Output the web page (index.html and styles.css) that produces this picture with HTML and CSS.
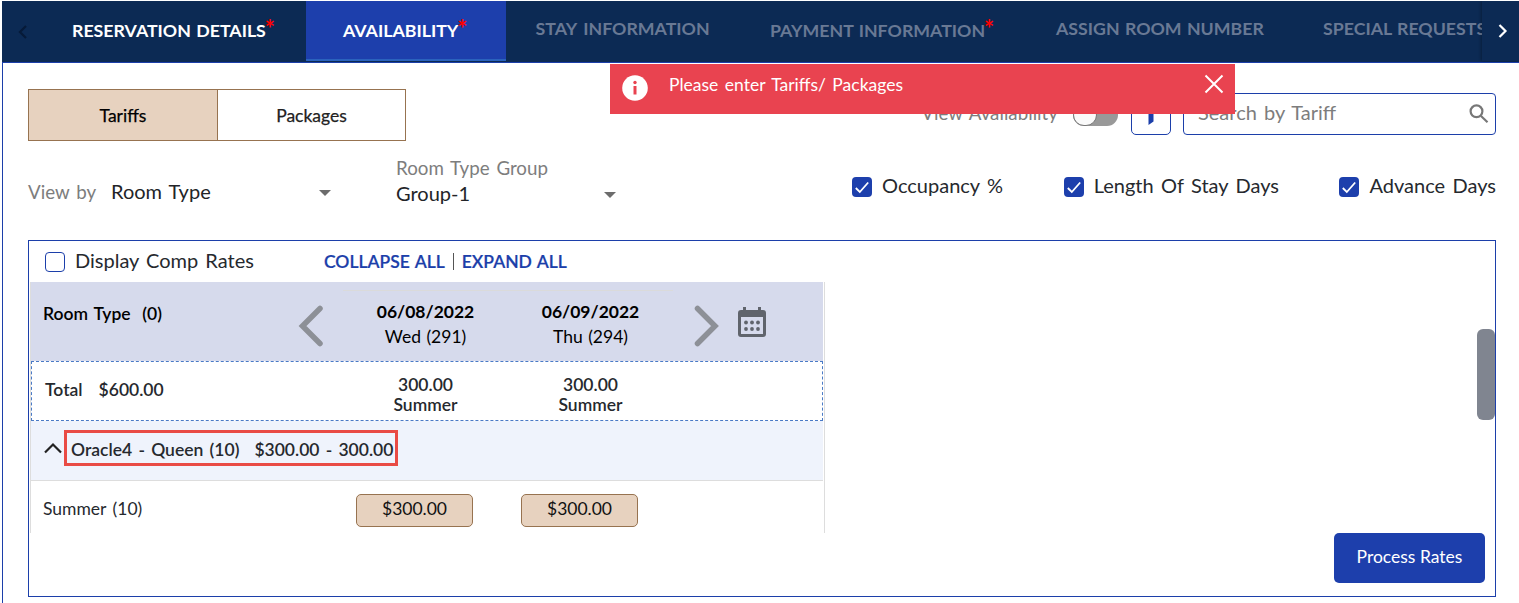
FILE: index.html
```html
<!DOCTYPE html>
<html lang="en">
<head>
<meta charset="utf-8">
<title>Availability</title>
<link rel="stylesheet" href="styles.css">
</head>
<body>
<div class="app">
  <nav class="tabs">
    <button class="scroll prev"><svg width="10" height="16" viewBox="0 0 10 16"><path d="M8 2 2 8l6 6"/></svg></button>
    <div class="tab t1"><span>RESERVATION DETAILS</span><sup>*</sup></div>
    <div class="tab t2 active"><span>AVAILABILITY</span><sup>*</sup></div>
    <div class="tab t3 off high"><span>STAY INFORMATION</span></div>
    <div class="tab t4 off"><span>PAYMENT INFORMATION</span><sup>*</sup></div>
    <div class="tab t5 off high"><span>ASSIGN ROOM NUMBER</span></div>
    <div class="tab t6 off high"><span>SPECIAL REQUESTS</span></div>
    <button class="scroll next"><svg width="10" height="16" viewBox="0 0 10 16"><path d="m1.500 2 6 6-6 6"/></svg></button>
  </nav>
  <main class="content">
    <div class="topline">
      <div class="segmented"><div class="seg on"><span>Tariffs</span></div><div class="seg"><span>Packages</span></div></div>
      <div class="tools">
        <span class="label view-avail">View Availability</span>
        <span class="switch"><i></i></span>
        <span class="filter"><svg width="16" height="22" viewBox="0 0 16 22"><path d="M0 2h16L10.500 10v8.500L5.500 22V10z"/></svg></span>
        <div class="search"><span class="label">Search by Tariff</span>
          <svg width="20" height="20" viewBox="0 0 20 20"><circle cx="7.500" cy="7.300" r="5.900"/><path d="m12 12 6.500 6.200"/></svg></div>
      </div>
    </div>
    <div class="filters">
      <div class="viewby"><span class="label">View by</span><span class="val">Room Type</span><i class="caret"></i></div>
      <div class="group"><span class="label">Room Type Group</span><div class="pick"><span class="val">Group-1</span><i class="caret"></i></div></div>
      <div class="checks">
        <div class="check"><svg width="20" height="20" viewBox="0 0 20 20"><rect width="20" height="20" rx="4"/><path d="m3.800 11 4 4L16.200 5.500"/></svg><span>Occupancy %</span></div>
        <div class="check"><svg width="20" height="20" viewBox="0 0 20 20"><rect width="20" height="20" rx="4"/><path d="m3.800 11 4 4L16.200 5.500"/></svg><span>Length Of Stay Days</span></div>
        <div class="check"><svg width="20" height="20" viewBox="0 0 20 20"><rect width="20" height="20" rx="4"/><path d="m3.800 11 4 4L16.200 5.500"/></svg><span>Advance Days</span></div>
      </div>
    </div>
    <section class="card">
      <div class="bar"><i class="box"></i><span class="comp">Display Comp Rates</span><span class="link">COLLAPSE ALL</span><i class="pipe"></i><span class="link">EXPAND ALL</span></div>
      <div class="table">
        <div class="row head">
          <div class="name"><span>Room Type&nbsp; (0)</span></div>
          <svg class="chev left" width="26" height="42" viewBox="0 0 26 42"><path d="M22 3.500 4.500 21 22 38.500"/></svg>
          <div class="date"><b>06/08/2022</b><span>Wed (291)</span></div>
          <div class="date"><b>06/09/2022</b><span>Thu (294)</span></div>
          <svg class="chev right" width="26" height="42" viewBox="0 0 26 42"><path d="M3.500 3.500 21 21 3.500 38.500"/></svg>
          <svg class="cal" width="28" height="32" viewBox="0 0 28 32"><path fill-rule="evenodd" d="M5 1h3v3h12V1h3v3h2a3 3 0 0 1 3 3v21a3 3 0 0 1-3 3H3a3 3 0 0 1-3-3V7a3 3 0 0 1 3-3h2zM3 11v17h22V11z"/><g><circle cx="8" cy="16.500" r="1.900"/><circle cx="14" cy="16.500" r="1.900"/><circle cx="20" cy="16.500" r="1.900"/><circle cx="8" cy="23" r="1.900"/><circle cx="14" cy="23" r="1.900"/><circle cx="20" cy="23" r="1.900"/></g></svg>
        </div>
        <div class="row total">
          <div class="name"><span>Total</span><span>$600.00</span></div>
          <div class="sum"><span>300.00</span><span>Summer</span></div>
          <div class="sum"><span>300.00</span><span>Summer</span></div>
        </div>
        <div class="row type">
          <svg width="18" height="12" viewBox="0 0 18 12"><path d="m1 10.500 8-8 8 8"/></svg>
          <div class="mark"><span>Oracle4 - Queen (10)</span><span>$300.00 - 300.00</span></div>
        </div>
        <div class="row rate">
          <div class="name"><span>Summer (10)</span></div>
          <div class="price"><span>$300.00</span></div>
          <div class="price"><span>$300.00</span></div>
        </div>
      </div>
      <button class="process"><span>Process Rates</span></button>
      <i class="thumb"></i>
    </section>
  </main>
</div>
<div class="toast">
  <svg class="info" width="26" height="26" viewBox="0 0 26 26"><circle cx="13" cy="13" r="12.800"/><circle class="r" cx="13" cy="7.500" r="1.700"/><path class="r" d="M11.500 11h3v8.500h-3z"/></svg>
  <span>Please enter Tariffs/ Packages</span>
  <svg class="close" width="20" height="20" viewBox="0 0 20 20"><path d="m1.500 1.500 17 17m0-17-17 17"/></svg>
</div>
</body>
</html>
```

FILE: styles.css
```css
* { box-sizing: border-box; }
body { margin: 0; background: #fff; font: 20px/24px Lato, "Liberation Sans", sans-serif; word-spacing: 2px; color: #26292e; overflow: hidden; }
span, b { white-space: nowrap; }
button { border: 0; padding: 0; font: inherit; word-spacing: inherit; }
svg { flex: none; display: block; }
.app { padding: 1px 0 0 2px; height: 603px; display: flex; flex-direction: column; }

.tabs { display: flex; height: 62px; background: #0c2a54; border-bottom: 1px solid #1c3faa; overflow: hidden; position: relative; flex: none; }
.tab { flex: none; height: 60px; padding-top: 17px; font-size: 17.75px; font-weight: 700; word-spacing: 1px; color: #fff; }
.tab sup { font-size: 24px; line-height: 0; color: #f00; font-weight: 700; vertical-align: -1px; margin-left: -1px; }
.high { padding-top: 15px; }
.off { color: #697994; }
.off sup { color: #f00; }
.active { background: #1d3fac; border-bottom: 2px solid #2a62bd; }
.t1 { width: 272px; padding-left: 38px; }
.t2 { width: 200px; padding-left: 37px; }
.t3 { width: 234px; padding-left: 29.5px; word-spacing: 2.5px; }
.t4 { width: 286px; padding-left: 30px; }
.t5 { width: 267px; padding-left: 30px; }
.t6 { width: 226px; padding-left: 30px; }
.scroll { background: #0c2a54; display: flex; align-items: center; flex: none; }
.scroll svg { fill: none; stroke-width: 2.2; stroke: #fff; }
.prev { width: 32px; padding-left: 15.5px; }
.prev svg { stroke: #061a38; }
.next { position: absolute; right: 0; top: 0; width: 37px; height: 60px; padding-left: 16px; box-shadow: -1px 0 3px rgba(0, 0, 0, .3); }

.content { flex: 1; border-left: 1px solid #1c3faa; padding: 26px 23px 6px 25px; display: flex; flex-direction: column; }
.topline { display: flex; justify-content: space-between; height: 52px; flex: none; }
.segmented { display: flex; width: 378px; border: 1px solid #977350; color: #222; font-size: 17.5px; }
.seg { flex: 1; display: flex; justify-content: center; padding-top: 14px; -webkit-text-stroke: .25px; }
.seg.on { background: #e7d2bf; border-right: 1px solid #977350; color: #000; flex: 0 0 189px; }
.label { color: #7d7d7d; font-size: 18.75px; }
.tools { display: flex; align-items: flex-start; padding-top: 4px; }
.view-avail { margin: 8px 15px 0 0; }
.switch { width: 45px; height: 22px; margin-top: 11px; border-radius: 11px; background: #999; display: block; }
.switch i { display: block; width: 24px; height: 22px; border-radius: 11px; background: #fafafa; border: 1px solid #777; }
.filter { width: 40px; height: 42px; margin-left: 13px; border: 1px solid #1c3faa; border-radius: 5px; padding: 9px 0 0 11px; fill: #1c3faa; }
.search { width: 313px; height: 42px; margin-left: 12px; border: 1px solid #1c3faa; border-radius: 4px; display: flex; justify-content: space-between; padding: 6px 6px 0 14px; }
.search .label { font-size: 20px; }
.search svg { margin-top: 4px; fill: none; stroke: #777; stroke-width: 2.2; }

.filters { display: flex; height: 99px; flex: none; }
.viewby { width: 368px; display: flex; padding-top: 39px; }
.viewby .label { width: 83px; }
.val { color: #222428; margin-top: -1px; }
.viewby .val { width: 208px; }
.caret { border: 6px solid transparent; border-top-color: #6c6c6c; border-bottom: 0; width: 12px; height: 6px; margin-top: 10px; }
.group { width: 220px; padding-top: 15px; }
.group .label { display: block; }
.pick { display: flex; justify-content: space-between; margin-top: 2px; }
.checks { flex: 1; display: flex; justify-content: flex-end; padding-top: 33px; gap: 60.5px; }
.check { display: flex; height: 24px; gap: 10px; word-spacing: 2.3px; }
.check span { margin-top: -1px; }
.check svg { margin-top: 3px; fill: #1d3fac; }
.check path { fill: none; stroke: #fff; stroke-width: 1.8; }

.card { flex: 1; border: 1px solid #1c3faa; position: relative; padding-left: 1px; }
.bar { height: 41px; display: flex; padding: 8px 0 0 15px; }
.box { width: 20px; height: 20px; border: 1px solid #1c3faa; border-radius: 4px; margin-top: 3px; }
.comp { margin: -1px 0 0 10px; width: 249px; }
.link { font-size: 17.5px; font-weight: 600; color: #1c3faa; word-spacing: 1px; margin-top: 1px; -webkit-text-stroke: .2px; }
.pipe { width: 1px; height: 17px; background: #555; margin: 4px 8px 0; }
.table { width: 795px; height: 251px; border: solid #ddd; border-width: 0 1px; font-size: 17.5px; padding-right: 1px; }
.row { display: flex; }
.head { height: 79px; background: #d6daec; color: #000; }
.head .name { width: 267px; padding: 20px 0 0 12px; font-weight: 600; word-spacing: 1.5px; }
.chev { margin-top: 23px; fill: none; stroke: #8d9097; stroke-width: 5.5; stroke-linecap: round; }
.left { margin-right: 19px; }
.date { width: 165px; margin-top: 8px; border-top: 1px solid #dadada; padding-top: 9px; display: flex; flex-direction: column; align-items: center; word-spacing: 1px; }
.date b { font-weight: 700; }
.date span { margin-top: 1px; }
.right { margin-left: 21px; }
.cal { margin: 24px 0 0 18px; fill: #60646c; }
.total { height: 60px; border: 1px dashed #4a7ac6; font-weight: 600; }
.total .name { width: 311px; padding: 16px 0 0 13px; display: flex; gap: 16px; }
.sum { width: 165px; padding-top: 13px; display: flex; flex-direction: column; align-items: center; line-height: 20px; }
.type { height: 60px; background: #eff3fc; border-bottom: 1px solid #ddd; padding: 9px 0 0 13px; font-weight: 600; word-spacing: 1.9px; }
.type svg { margin-top: 12px; fill: none; stroke: #222; stroke-width: 2.2; }
.mark { width: 334px; height: 36px; border: 3px solid #e94b45; margin-left: 2px; padding: 5px 0 0 4px; display: flex; gap: 15px; }
.rate .name { width: 325px; padding: 16px 0 0 12px; }
.price { width: 117px; height: 33px; margin: 13px 48px 0 0; background: #e7d2bf; border: 1px solid #977350; border-radius: 5px; display: flex; justify-content: center; padding-top: 2px; color: #111; }
.process { position: absolute; right: 10px; bottom: 13px; width: 151px; height: 50px; padding-bottom: 2px; background: #1d3fac; border-radius: 5px; color: #fff; font-size: 17.5px; word-spacing: 0; }
.thumb { position: absolute; right: 0; top: 88px; width: 18px; height: 91px; background: #808590; border-radius: 6px; }

.toast { position: absolute; left: 610px; top: 64px; width: 625px; height: 50px; background: #e94350; color: #fff; display: flex; padding: 9px 11px 0 12px; font-size: 17.5px; }
.toast .info { margin: 2px 21px 0 0; fill: #fff; }
.toast .r { fill: #e94350; }
.close { margin: 1px 0 0 auto; fill: none; stroke: #fff; stroke-width: 2; }
```
